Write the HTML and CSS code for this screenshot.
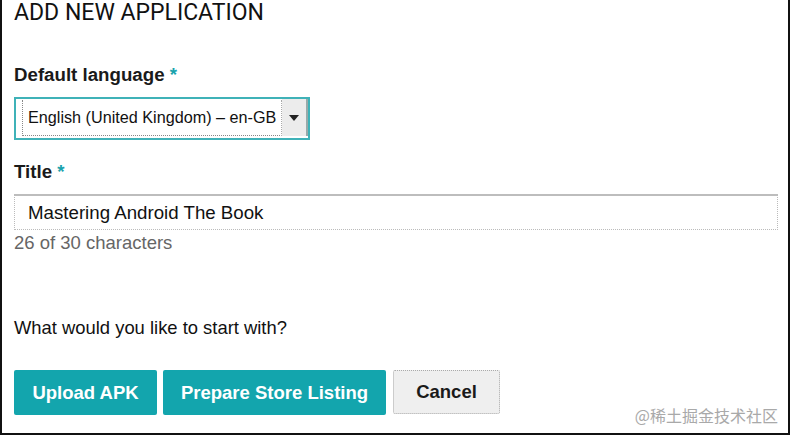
FILE: index.html
```html
<!DOCTYPE html>
<html>
<head>
<meta charset="utf-8">
<link rel="stylesheet" href="styles.css">
</head>
<body>
<div class="frame">
  <h1 class="heading">ADD NEW APPLICATION</h1>
  <div class="field field-lang">
    <label class="label">Default language <span class="req">*</span></label>
    <div class="select">
      <div class="select-value">English (United Kingdom) – en-GB</div>
      <div class="select-arrow">
        <svg width="10" height="6" viewBox="0 0 10 6"><path d="M0 0H10L5 6Z" fill="#222"/></svg>
      </div>
    </div>
  </div>
  <div class="field field-title">
    <label class="label">Title <span class="req">*</span></label>
    <div class="input">Mastering Android The Book</div>
    <div class="hint">26 of 30 characters</div>
  </div>
  <p class="question">What would you like to start with?</p>
  <div class="actions">
    <button class="btn btn-primary">Upload APK</button>
    <button class="btn btn-primary btn-wide">Prepare Store Listing</button>
    <button class="btn btn-cancel">Cancel</button>
  </div>
  <div class="watermark">@稀土掘金技术社区</div>
</div>
</body>
</html>
```
FILE: styles.css
```css
html, body {
  margin: 0;
  padding: 0;
  background: #fff;
}
.frame {
  position: relative;
  box-sizing: border-box;
  width: 790px;
  height: 435px;
  border-left: 2px solid #111;
  border-right: 2px solid #111;
  border-bottom: 2px solid #111;
  padding: 0 10px 0 12px;
  font-family: "Liberation Sans", Arial, sans-serif;
  color: #111;
  display: flex;
  flex-direction: column;
}
.heading {
  margin: 0;
  font-family: Roboto, "Liberation Sans", sans-serif;
  font-weight: 400;
  font-size: 23px;
  line-height: 26px;
  color: #111;
}
.field {
  display: flex;
  flex-direction: column;
}
.field-lang {
  margin-top: 38px;
}
.label {
  font-weight: 700;
  font-size: 18.7px;
  line-height: 22px;
  color: #1a1a1a;
}
.req {
  color: #1aa3ad;
}
.select {
  margin-top: 11px;
  width: 296px;
  height: 43px;
  box-sizing: border-box;
  border: 2px solid #3fb2b8;
  display: flex;
  align-items: stretch;
  background: #fff;
}
.select-value {
  flex: 1;
  margin: 1px 0 2px 6px;
  border-left: 1px dotted #888;
  border-bottom: 1px dotted #888;
  border-right: 1px dotted #aaa;
  padding-left: 5px;
  font-size: 16.2px;
  display: flex;
  align-items: center;
  color: #111;
}
.select-arrow {
  width: 24px;
  background: #ececec;
  border-right: 2px solid #9aa;
  display: flex;
  align-items: center;
  justify-content: center;
  margin-bottom: 2px;
}
.field-title {
  margin-top: 21px;
}
.input {
  margin-top: 11px;
  width: 764px;
  height: 36px;
  box-sizing: border-box;
  border-top: 2px solid #bdbdbd;
  border-left: 1px dotted #bbb;
  border-right: 1px dotted #bbb;
  border-bottom: 1px dotted #bbb;
  padding-left: 13px;
  font-size: 18.7px;
  display: flex;
  align-items: center;
  color: #111;
}
.hint {
  margin-top: 3px;
  font-size: 18.5px;
  line-height: 20px;
  color: #666;
}
.question {
  margin: 65px 0 0 0;
  font-size: 18.4px;
  line-height: 20px;
  color: #111;
}
.actions {
  margin-top: 32px;
  display: flex;
  gap: 6px;
}
.btn {
  height: 45px;
  border: none;
  border-radius: 2px;
  font-family: "Liberation Sans", Arial, sans-serif;
  font-weight: 700;
  font-size: 18.5px;
  padding: 0;
  cursor: pointer;
}
.btn-primary {
  width: 143px;
  background: #13a5ad;
  color: #fff;
}
.btn-wide {
  width: 223px;
}
.btn-cancel {
  margin-left: 1px;
  width: 107px;
  height: 44px;
  background: #efefef;
  color: #1a1a1a;
  border: 1px dotted #aaa;
}
.watermark {
  position: absolute;
  right: 10px;
  bottom: 6px;
  font-family: "Noto Sans CJK SC", sans-serif;
  font-size: 16px;
  color: #a9a9a9;
}
```
